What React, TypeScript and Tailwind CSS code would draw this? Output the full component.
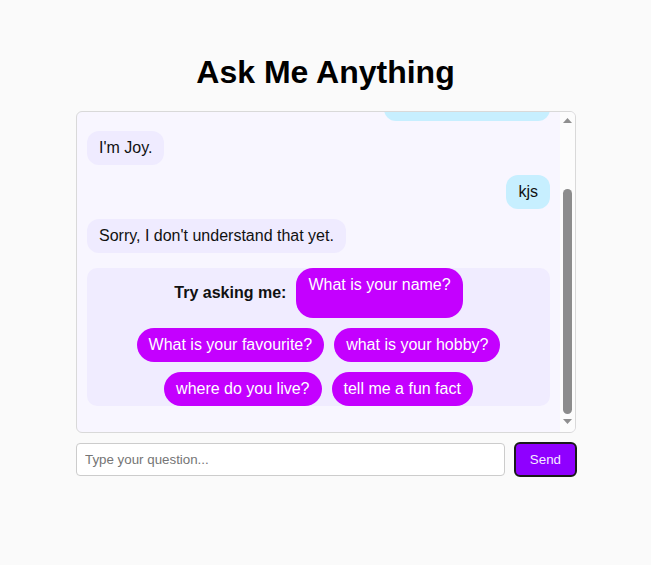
import React from "react";

const suggestions = [
  "What is your favourite?",
  "what is your hobby?",
  "where do you live?",
  "tell me a fun fact",
];

function Bubble({ from, text }: { from: "bot" | "user"; text: string }) {
  if (from === "user") {
    return (
      <div className="flex justify-end shrink-0">
        <div className="bg-[#c7efff] text-[#111] rounded-[12px] px-3 py-[6px] leading-[22px] text-[16px]">
          {text}
        </div>
      </div>
    );
  }
  return (
    <div className="flex justify-start shrink-0">
      <div className="bg-[#efebff] text-[#111] rounded-[12px] px-3 py-[6px] leading-[22px] text-[16px]">
        {text}
      </div>
    </div>
  );
}

function Chip({ text, tall }: { text: string; tall?: boolean }) {
  return (
    <div
      className={
        "bg-[#c400ff] text-white rounded-[17px] px-3 pt-[6px] pb-[6px] leading-[22px] text-[16px] cursor-pointer " +
        (tall ? "h-[50px]" : "")
      }
    >
      {text}
    </div>
  );
}

function ScrollBar() {
  return (
    <div className="w-[15px] shrink-0 bg-[#fcfcfc] flex flex-col items-center">
      <svg width="9" height="5" viewBox="0 0 9 5" className="mt-[6px]">
        <polygon points="4.5,0 9,5 0,5" fill="#8f8f8f" />
      </svg>
      <div className="flex-1 w-full flex flex-col justify-end items-center pb-[5px]">
        <div className="w-[9px] h-[225px] rounded-full bg-[#8c8c8c]" />
      </div>
      <svg width="9" height="5" viewBox="0 0 9 5" className="mb-[8px]">
        <polygon points="0,0 9,0 4.5,5" fill="#8f8f8f" />
      </svg>
    </div>
  );
}

export default function App() {
  return (
    <div
      className="min-h-[565px] w-full bg-[#fafafa] flex flex-col items-center"
      style={{ fontFamily: '"Liberation Sans", Arial, sans-serif' }}
    >
      <h1 className="text-[32px] font-bold text-black mt-[54px] leading-[36px] mb-[21px]">
        Ask Me Anything
      </h1>
      <div className="w-[500px] ml-px">
        <div className="h-[322px] border border-[#d9d9d9] rounded-[6px] bg-[#f8f6ff] overflow-hidden flex">
          <div className="flex-1 flex flex-col justify-end overflow-hidden gap-[10px] px-[10px] pb-[10px]">
            <Bubble from="bot" text="Hi! I'm here to answer your questions." />
            <Bubble from="user" text="What is your name?" />
            <Bubble from="bot" text="I'm Joy." />
            <Bubble from="user" text="kjs" />
            <Bubble from="bot" text="Sorry, I don't understand that yet." />
            <div className="shrink-0 bg-[#f0ecff] rounded-[10px] flex flex-wrap justify-center gap-[10px] mt-[5px] mb-4">
              <div className="h-[50px] flex items-center font-bold text-[16px] text-[#111]">
                Try asking me:
              </div>
              <Chip text="What is your name?" tall />
              {suggestions.map((s) => (
                <Chip key={s} text={s} />
              ))}
            </div>
          </div>
          <ScrollBar />
        </div>
        <div className="w-[501px] flex gap-[9px] mt-[9px] items-center">
          <input
            className="flex-1 h-[33px] bg-white border border-[#cccccc] rounded-[4px] px-2 text-[13.33px] outline-none placeholder:text-[#757575]"
            placeholder="Type your question..."
          />
          <button className="h-[35px] px-[14px] bg-[#8f00ff] text-[#f6ecff] border-2 border-[#1a1a1a] rounded-[6px] text-[13.33px]">
            Send
          </button>
        </div>
      </div>
    </div>
  );
}
